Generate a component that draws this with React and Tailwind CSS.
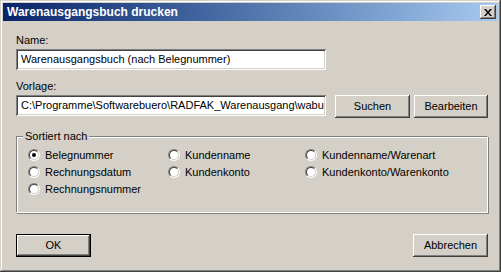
const raised =
    'bg-[#d4d0c8] shadow-[inset_-1px_-1px_#404040,inset_1px_1px_#ffffff,inset_-2px_-2px_#808080,inset_2px_2px_#d4d0c8]';
const sunken =
    'bg-white shadow-[inset_1px_1px_#808080,inset_-1px_-1px_#ffffff,inset_2px_2px_#404040,inset_-2px_-2px_#d4d0c8]';

const Button = ({ label, width = 'w-[75px]', isDefault = false }) => (
    <div
        className={`${width} h-[23px] flex items-center justify-center ${
            isDefault ? 'border border-black' : ''
        }`}
    >
        <div className={`w-full h-full flex items-center justify-center ${raised}`}>
            {label}
        </div>
    </div>
);

const Radio = ({ label, checked = false }) => (
    <div className="flex items-center gap-[5px] h-[16px]">
        <div className="w-[12px] h-[12px] rounded-full border border-t-[#808080] border-l-[#808080] border-b-white border-r-white">
            <div className="w-full h-full rounded-full border border-t-[#404040] border-l-[#404040] border-b-[#d4d0c8] border-r-[#d4d0c8] bg-white flex items-center justify-center">
                {checked && <div className="w-[4px] h-[4px] rounded-full bg-black" />}
            </div>
        </div>
        <span>{label}</span>
    </div>
);

export default function App() {
    return (
        <div className="w-[501px] h-[272px] bg-[#d4d0c8] p-[3px] flex flex-col text-[11px] text-black font-['Liberation_Sans',sans-serif] shadow-[inset_-1px_-1px_#404040,inset_1px_1px_#d4d0c8,inset_-2px_-2px_#808080,inset_2px_2px_#ffffff]">
            {/* Titelleiste */}
            <div className="h-[18px] flex items-center justify-between pl-[4px] pr-[2px] bg-gradient-to-r from-[#0a246a] to-[#a6caf0]">
                <span className="text-white font-bold text-[12px]">Warenausgangsbuch drucken</span>
                <div className={`w-[16px] h-[14px] flex items-center justify-center ${raised}`}>
                    <svg width="8" height="7" viewBox="0 0 8 7">
                        <path d="M0 0h2l2 2.5L6 0h2L5 3.5 8 7H6L4 4.5 2 7H0l3-3.5z" fill="#000" />
                    </svg>
                </div>
            </div>

            <div className="flex-1 flex flex-col px-[13px] pt-[12px]">
                <div className="h-[14px] leading-[14px]">Name:</div>
                <div className={`mt-[2px] w-[310px] h-[21px] flex items-center px-[5px] ${sunken}`}>
                    Warenausgangsbuch (nach Belegnummer)
                </div>

                <div className="mt-[9px] h-[14px] leading-[14px]">Vorlage:</div>
                <div className="mt-[2px] flex items-start">
                    <div className={`w-[310px] h-[21px] flex items-center px-[5px] whitespace-nowrap ${sunken}`}>
                        C:\Programme\Softwarebuero\RADFAK_Warenausgang\wabu
                    </div>
                    <div className="ml-[9px]">
                        <Button label="Suchen" />
                    </div>
                    <div className="ml-[4px]">
                        <Button label="Bearbeiten" width="w-[74px]" />
                    </div>
                </div>

                {/* Gruppe Sortierung */}
                <div className="relative mt-[18px] w-[472px] h-[77px] border border-t-[#808080] border-l-[#808080] border-b-white border-r-white shadow-[inset_1px_1px_#ffffff,1px_1px_#808080]">
                    <span className="absolute -top-[8px] left-[6px] px-[2px] bg-[#d4d0c8] leading-[14px]">
                        Sortiert nach
                    </span>
                    <div className="grid grid-cols-[140px_137px_1fr] pl-[11px] pt-[10px]">
                        <div className="flex flex-col gap-[1px]">
                            <Radio label="Belegnummer" checked />
                            <Radio label="Rechnungsdatum" />
                            <Radio label="Rechnungsnummer" />
                        </div>
                        <div className="flex flex-col gap-[1px]">
                            <Radio label="Kundenname" />
                            <Radio label="Kundenkonto" />
                        </div>
                        <div className="flex flex-col gap-[1px]">
                            <Radio label="Kundenname/Warenart" />
                            <Radio label="Kundenkonto/Warenkonto" />
                        </div>
                    </div>
                </div>

                <div className="mt-[21px] flex justify-between w-[472px]">
                    <Button label="OK" isDefault />
                    <Button label="Abbrechen" />
                </div>
            </div>
        </div>
    );
}
